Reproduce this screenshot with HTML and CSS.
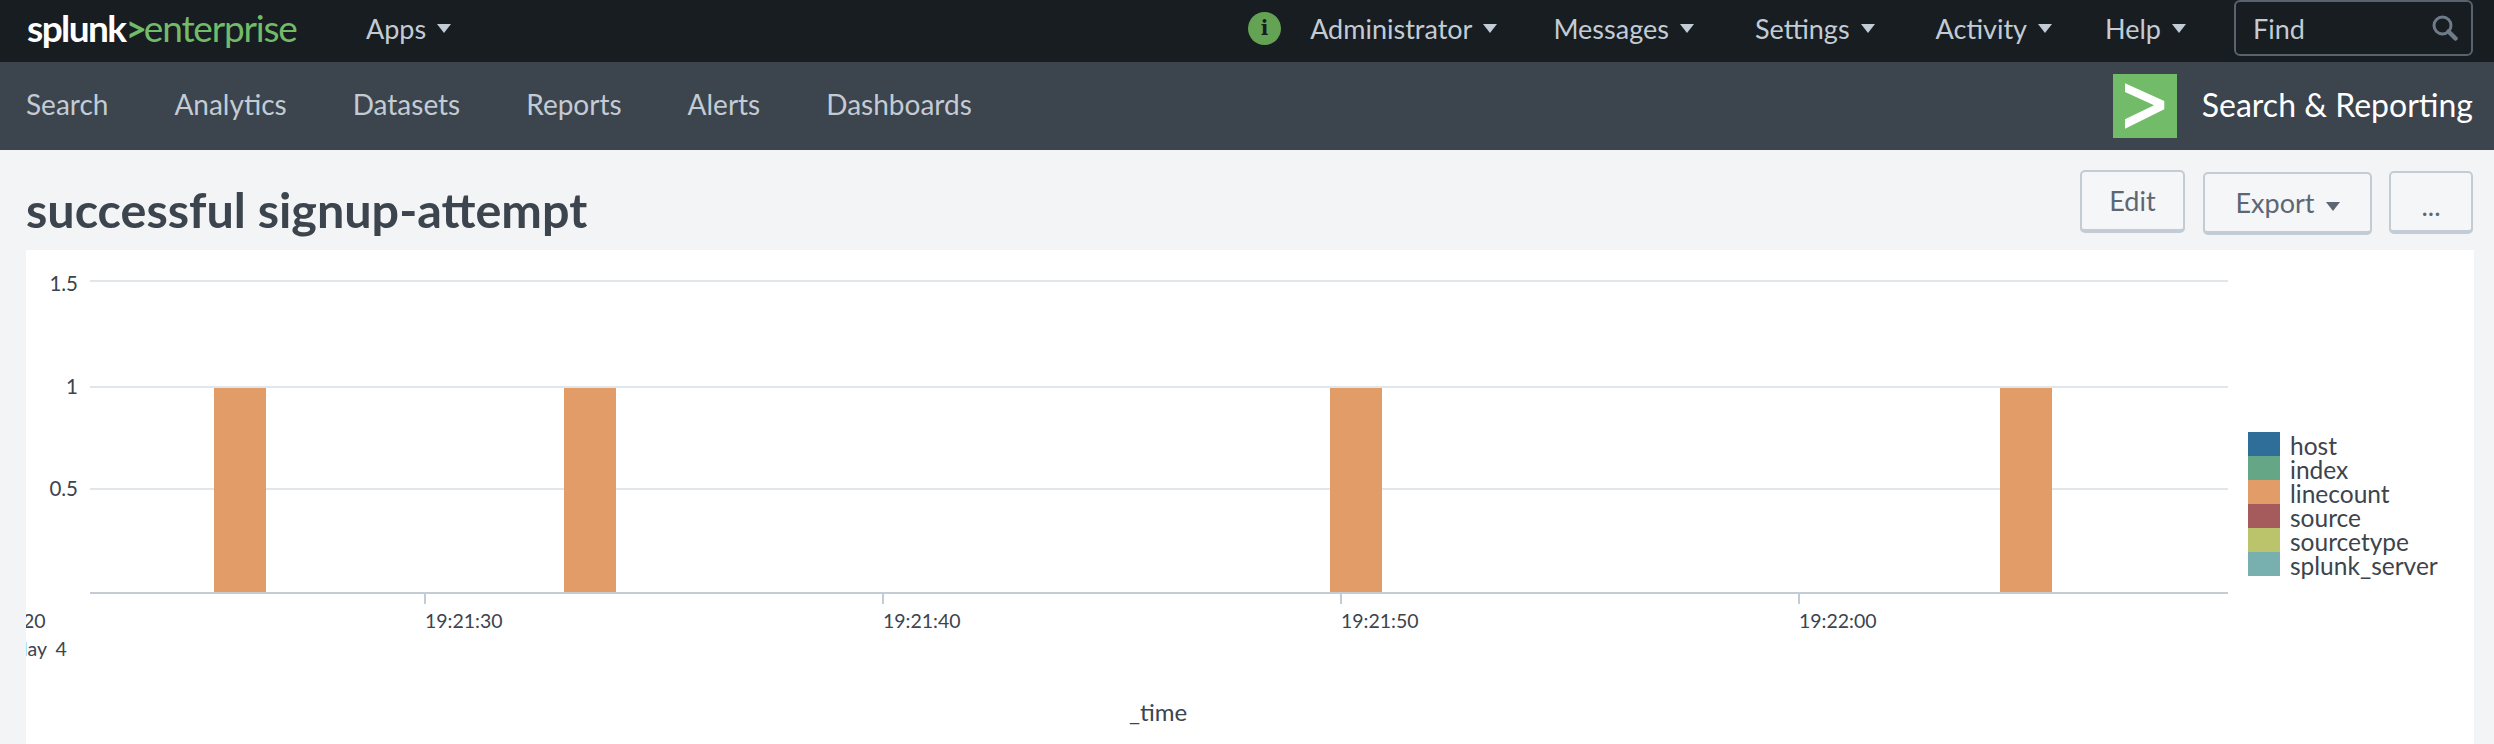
FILE: index.html
```html
<!DOCTYPE html>
<html lang="en">
<head>
  <meta charset="UTF-8" />
  <meta name="viewport" content="width=device-width, initial-scale=1.0" />
  <title>successful signup-attempt</title>
  <link rel="stylesheet" href="styles.css">
</head>
<body>
  <header class="topbar">
    <div class="brand"><span class="brand-name">splunk</span><span class="brand-gt">&gt;</span><span class="brand-product">enterprise</span></div>
    <a class="menu menu-apps">Apps<i class="caret"></i></a>
    <div class="topbar-right">
      <span class="info-dot">i</span>
      <a class="menu menu-admin">Administrator<i class="caret"></i></a>
      <a class="menu menu-messages">Messages<i class="caret"></i></a>
      <a class="menu menu-settings">Settings<i class="caret"></i></a>
      <a class="menu menu-activity">Activity<i class="caret"></i></a>
      <a class="menu menu-help">Help<i class="caret"></i></a>
      <div class="find">
        <span>Find</span>
        <svg class="find-icon" viewBox="0 0 26 26" width="26" height="26">
          <circle cx="10.5" cy="10.5" r="8.5" fill="none" stroke="#6f7b88" stroke-width="3" />
          <path d="M16.5 16.5l7 7" stroke="#6f7b88" stroke-width="4.5" stroke-linecap="round" />
        </svg>
      </div>
    </div>
  </header>

  <nav class="appbar">
    <a>Search</a>
    <a>Analytics</a>
    <a>Datasets</a>
    <a>Reports</a>
    <a>Alerts</a>
    <a>Dashboards</a>
    <div class="app-name">
      <svg class="app-logo" viewBox="0 0 64 64" width="64" height="64">
        <rect width="64" height="64" fill="#71bb69" />
        <path d="M12 9.3L51.3 27v8.3L12 54.7v-9.4L41 31.3 12 18z" fill="#fff" />
      </svg>
      <span>Search &amp; Reporting</span>
    </div>
  </nav>

  <main class="page">
    <div class="page-head">
      <h1>successful signup-attempt</h1>
      <div class="actions">
        <button class="btn btn-edit">Edit</button>
        <button class="btn btn-export">Export<i class="caret caret-dark"></i></button>
        <button class="btn btn-more">...</button>
      </div>
    </div>

    <section class="card">
      <svg class="chart" viewBox="26 250 2448 494" width="2448" height="494">
        <g class="grid">
          <line x1="90" x2="2228" y1="281" y2="281" />
          <line x1="90" x2="2228" y1="387" y2="387" />
          <line x1="90" x2="2228" y1="489" y2="489" />
        </g>
        <g class="y-labels">
          <text x="78" y="291">1.5</text>
          <text x="78" y="394">1</text>
          <text x="78" y="496">0.5</text>
        </g>
        <g class="bars">
          <rect x="214" y="388" width="52" height="205" />
          <rect x="564" y="388" width="52" height="205" />
          <rect x="1330" y="388" width="52" height="205" />
          <rect x="2000" y="388" width="52" height="205" />
        </g>
        <line class="axis" x1="90" x2="2228" y1="593" y2="593" />
        <g class="ticks">
          <line x1="425" x2="425" y1="594" y2="604" />
          <line x1="883" x2="883" y1="594" y2="604" />
          <line x1="1341" x2="1341" y1="594" y2="604" />
          <line x1="1799" x2="1799" y1="594" y2="604" />
        </g>
        <g class="x-labels">
          <text x="-32" y="628">19:21:20</text>
          <text class="date-label" x="-39" y="656">Mon May 4</text>
          <text x="425" y="628">19:21:30</text>
          <text x="883" y="628">19:21:40</text>
          <text x="1341" y="628">19:21:50</text>
          <text x="1799" y="628">19:22:00</text>
        </g>
        <text class="x-title" x="1158" y="721">_time</text>
        <g class="legend">
          <rect class="s-host" x="2248" y="432" width="32" height="24" />
          <rect class="s-index" x="2248" y="456" width="32" height="24" />
          <rect class="s-linecount" x="2248" y="480" width="32" height="24" />
          <rect class="s-source" x="2248" y="504" width="32" height="24" />
          <rect class="s-sourcetype" x="2248" y="528" width="32" height="24" />
          <rect class="s-server" x="2248" y="552" width="32" height="24" />
          <text x="2290" y="455">host</text>
          <text x="2290" y="479">index</text>
          <text x="2290" y="503">linecount</text>
          <text x="2290" y="527">source</text>
          <text x="2290" y="551">sourcetype</text>
          <text x="2290" y="575">splunk_server</text>
        </g>
      </svg>
    </section>
  </main>
</body>
</html>
```
FILE: styles.css
```css
html, body {
  margin: 0;
  height: 744px;
  overflow: hidden;
}
body {
  background-color: #f2f4f5;
  color: #3c444d;
  font-family: Lato, "Open Sans", sans-serif;
}

/* top black bar */
.topbar {
  box-sizing: border-box;
  height: 62px;
  background-color: #171d21;
  display: flex;
  align-items: center;
  padding: 0 21px 6px 27px;
}
.brand {
  font-size: 37px;
  line-height: 56px;
  width: 339px;
}
.brand-name {
  color: #fff;
  font-weight: 700;
  letter-spacing: -1.6px;
}
.brand-gt {
  color: #71bb69;
  font-weight: 700;
  letter-spacing: -3px;
}
.brand-product {
  color: #71bb69;
  letter-spacing: -1.2px;
}
.menu {
  color: #c3cbd4;
  font-size: 27px;
  display: flex;
  align-items: center;
}
.caret {
  display: inline-block;
  width: 0;
  height: 0;
  margin-left: 11px;
  border-left: 7px solid transparent;
  border-right: 7px solid transparent;
  border-top: 9px solid #c3cbd4;
}
.topbar-right {
  margin-left: auto;
  display: flex;
  align-items: center;
}
.info-dot {
  width: 33px;
  height: 33px;
  border-radius: 50%;
  background-color: #65a354;
  color: #171d21;
  font-family: "DejaVu Serif", serif;
  font-weight: 700;
  font-size: 20px;
  line-height: 33px;
  text-align: center;
  margin-right: 29px;
}
.menu-admin { margin-right: 56px; }
.menu-messages { margin-right: 61px; }
.menu-settings { margin-right: 61px; }
.menu-activity { margin-right: 53px; }
.menu-help { margin-right: 48px; }
.find {
  box-sizing: border-box;
  width: 239px;
  height: 56px;
  border: 2px solid #59636e;
  border-radius: 6px;
  color: #c3cbd4;
  font-size: 27px;
  display: flex;
  align-items: center;
  justify-content: space-between;
  padding: 0 13px 0 17px;
}

/* app nav */
.appbar {
  height: 88px;
  background-color: #3c444d;
  display: flex;
  align-items: center;
  gap: 66px;
  padding-left: 26px;
  padding-right: 21px;
  font-size: 28px;
  color: #c3cbd4;
}
.appbar a {
  margin-top: -4px;
}
.app-name {
  margin-left: auto;
  display: flex;
  align-items: center;
  gap: 25px;
  color: #fff;
  font-size: 32px;
}
.app-name span {
  margin-top: -3px;
}
.app-logo {
  display: block;
}

/* page */
.page-head {
  height: 100px;
  display: flex;
  justify-content: space-between;
  padding: 0 21px 0 26px;
}
h1 {
  margin: 0;
  font-size: 48.5px;
  font-weight: 700;
  line-height: 118px;
  color: #3c444d;
}
.actions {
  display: flex;
  align-items: flex-start;
  gap: 18px;
}
.btn {
  box-sizing: border-box;
  height: 63px;
  background-color: #f5f6f7;
  border: 2px solid #c3cbd4;
  border-bottom-width: 4px;
  border-radius: 5px;
  color: #5c6773;
  font-family: inherit;
  font-size: 27px;
  padding: 0;
}
.btn-edit { width: 105px; margin-top: 20px; }
.btn-export { width: 169px; margin-top: 22px; }
.btn-more { width: 84px; margin-top: 21px; margin-left: -1px; padding-top: 8px; }
.caret-dark {
  border-top-color: #5c6773;
  vertical-align: middle;
}

/* chart card */
.card {
  margin: 0 20px 0 26px;
  background-color: #fff;
}
.chart {
  display: block;
}
.chart text {
  fill: #3c444d;
  font-family: Lato, "Open Sans", sans-serif;
  font-size: 19.5px;
}
.chart .date-label { word-spacing: 4px; }
.grid line {
  stroke: #e1e6eb;
  stroke-width: 2;
}
.axis, .ticks line {
  stroke: #c3cbd4;
  stroke-width: 2;
}
.bars rect { fill: #e19c68; }
.chart .y-labels text { font-size: 20.5px; text-anchor: end; }
.chart .x-title { font-size: 24px; text-anchor: middle; }
.chart .legend text { font-size: 24.5px; }
.s-host { fill: #2e6e99; }
.s-index { fill: #65a686; }
.s-linecount { fill: #e19c68; }
.s-source { fill: #a55b5b; }
.s-sourcetype { fill: #bbc46b; }
.s-server { fill: #78b0b0; }
```
